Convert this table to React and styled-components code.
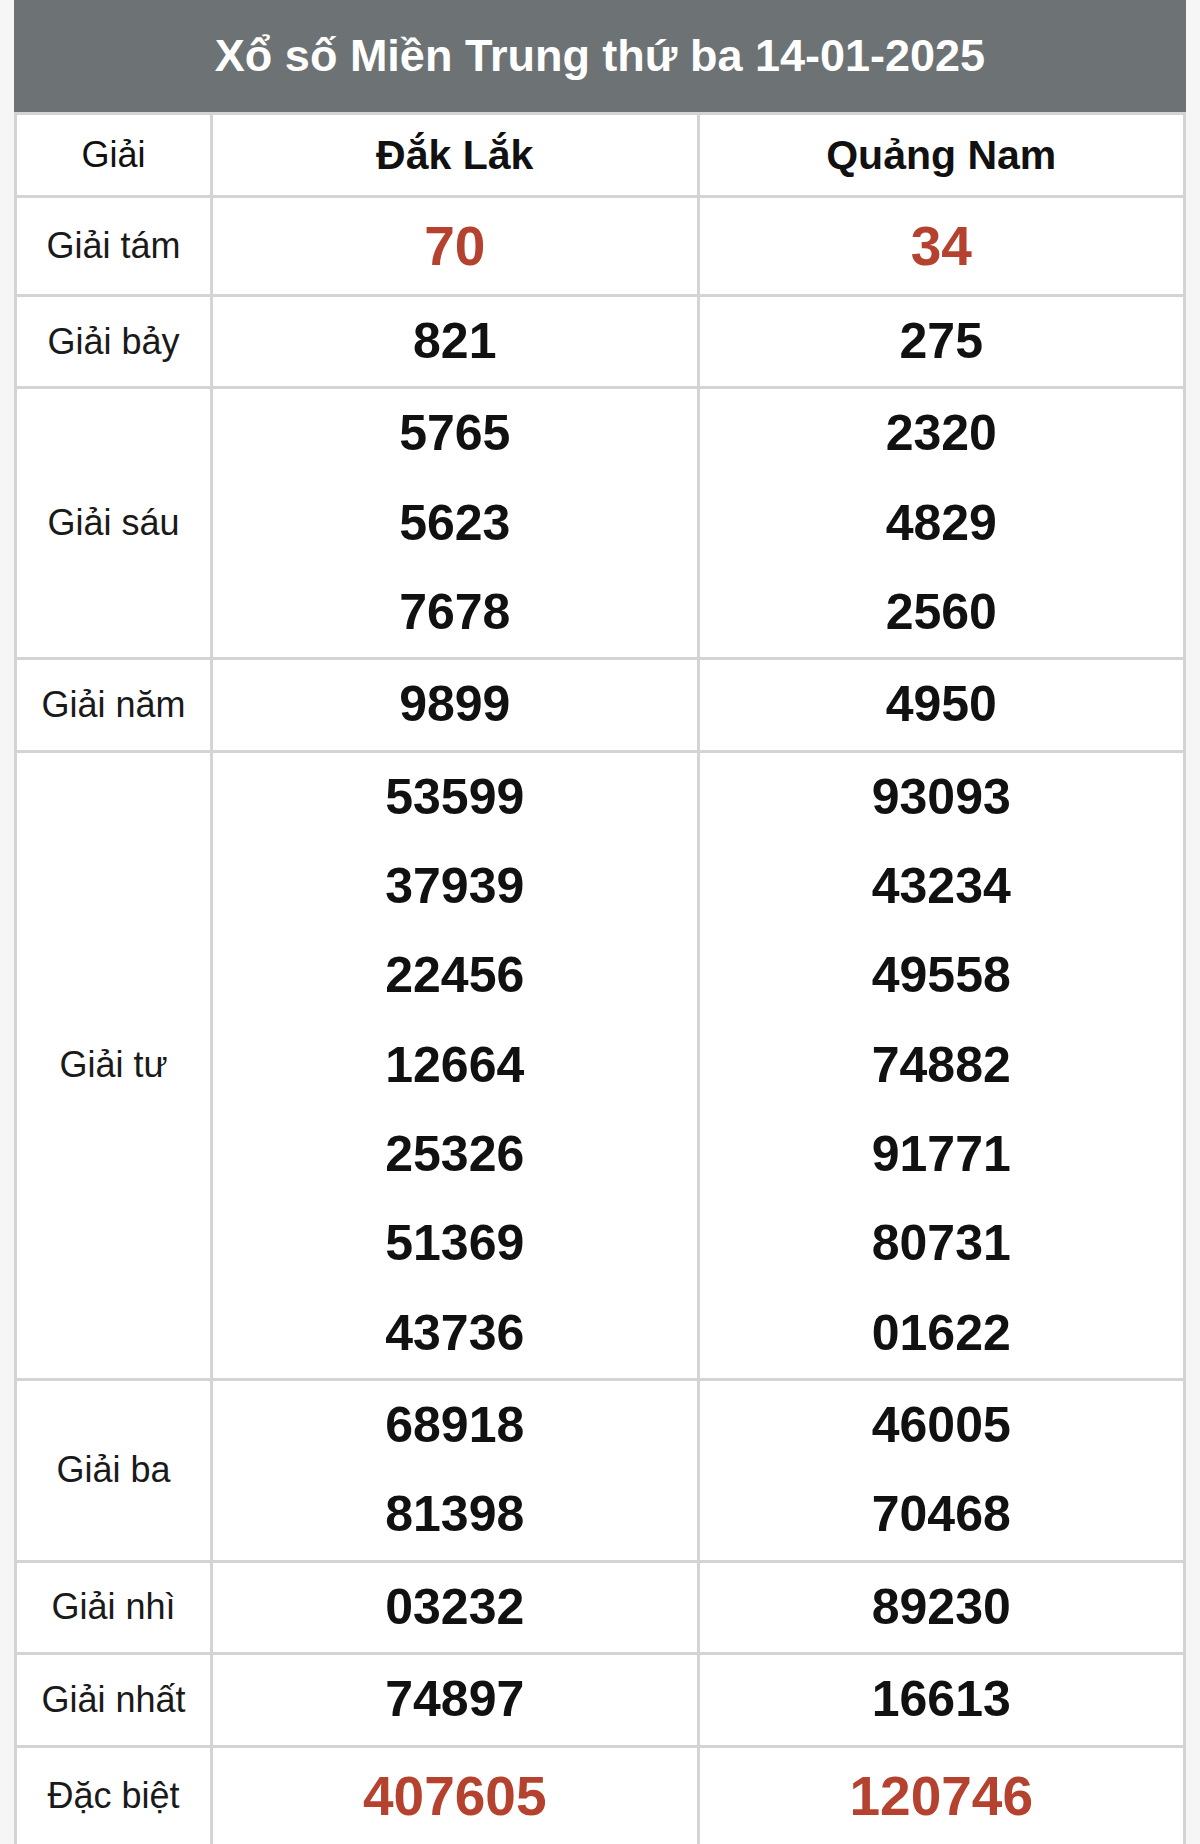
import React from 'react';
import styled, { createGlobalStyle } from 'styled-components';

const GlobalStyle = createGlobalStyle`
  html, body {
    margin: 0;
    padding: 0;
    background: #f6f6f6;
    font-family: "Liberation Sans", Arial, sans-serif;
  }
`;

const Page = styled.div`
  padding: 0 14px;
  box-sizing: border-box;
  width: 1200px;
`;

const Title = styled.div`
  height: 112px;
  background: #6d7274;
  color: #fff;
  font-size: 45px;
  font-weight: 700;
  display: flex;
  align-items: center;
  justify-content: center;
`;

const Table = styled.table`
  width: 100%;
  border-collapse: collapse;
  background: #fff;
  table-layout: fixed;
`;

const Cell = styled.td`
  border: 3px solid #d4d4d4;
  padding: 0;
  text-align: center;
  vertical-align: middle;
  color: #1a1a1a;
`;

const HeadCell = styled(Cell)`
  height: 80px;
  font-size: ${(p) => (p.$bold ? '41px' : '36px')};
  font-weight: ${(p) => (p.$bold ? 700 : 400)};
  color: #111;
`;

const Label = styled(Cell)`
  font-size: 36px;
`;

const Num = styled.div`
  line-height: ${(p) => (p.$big ? '96px' : '89.35px')};
  font-size: ${(p) => (p.$big ? '55px' : '50px')};
  font-weight: 700;
  color: ${(p) => (p.$big ? '#b5412f' : '#111')};
`;

const rows = [
  { name: 'Giải tám', big: true, a: ['70'], b: ['34'] },
  { name: 'Giải bảy', a: ['821'], b: ['275'] },
  { name: 'Giải sáu', a: ['5765', '5623', '7678'], b: ['2320', '4829', '2560'] },
  { name: 'Giải năm', a: ['9899'], b: ['4950'] },
  {
    name: 'Giải tư',
    a: ['53599', '37939', '22456', '12664', '25326', '51369', '43736'],
    b: ['93093', '43234', '49558', '74882', '91771', '80731', '01622'],
  },
  { name: 'Giải ba', a: ['68918', '81398'], b: ['46005', '70468'] },
  { name: 'Giải nhì', a: ['03232'], b: ['89230'] },
  { name: 'Giải nhất', a: ['74897'], b: ['16613'] },
  { name: 'Đặc biệt', big: true, a: ['407605'], b: ['120746'] },
];

export default function App() {
  return (
    <Page>
      <GlobalStyle />
      <Title>Xổ số Miền Trung thứ ba 14-01-2025</Title>
      <Table>
        <colgroup>
          <col style={{ width: '196px' }} />
          <col />
          <col />
        </colgroup>
        <thead>
          <tr>
            <HeadCell as="th">Giải</HeadCell>
            <HeadCell as="th" $bold>Đắk Lắk</HeadCell>
            <HeadCell as="th" $bold>Quảng Nam</HeadCell>
          </tr>
        </thead>
        <tbody>
          {rows.map((r) => (
            <tr key={r.name}>
              <Label>{r.name}</Label>
              <Cell>
                {r.a.map((n) => (
                  <Num key={n} $big={r.big}>{n}</Num>
                ))}
              </Cell>
              <Cell>
                {r.b.map((n) => (
                  <Num key={n} $big={r.big}>{n}</Num>
                ))}
              </Cell>
            </tr>
          ))}
        </tbody>
      </Table>
    </Page>
  );
}
